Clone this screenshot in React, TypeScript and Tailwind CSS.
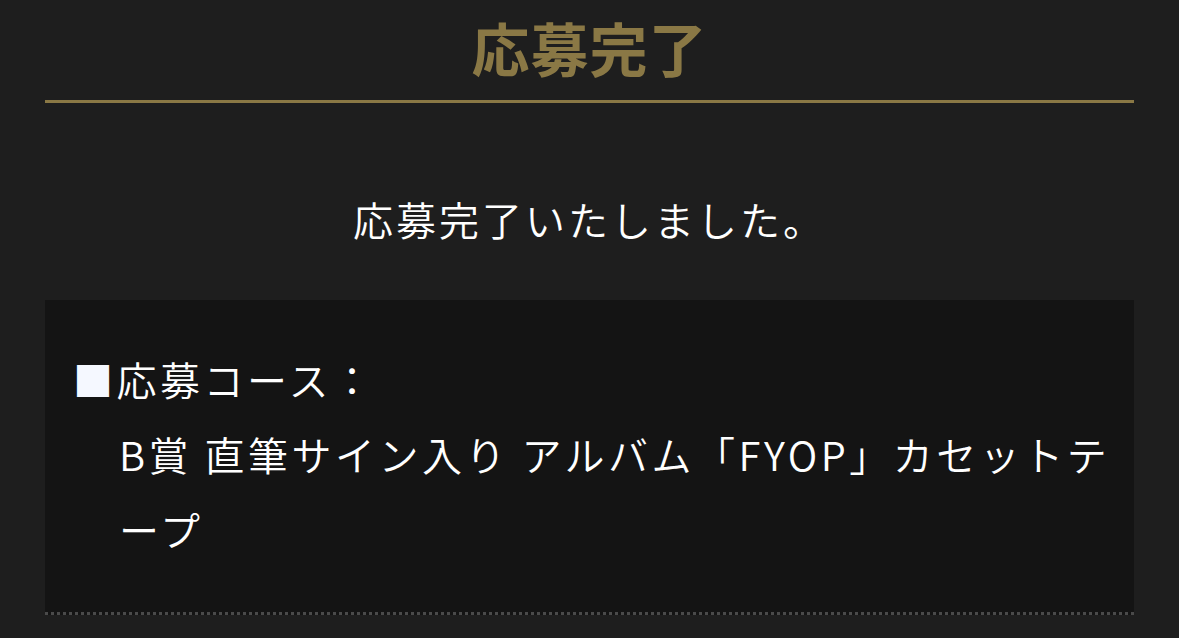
import React from 'react';

const jp = { fontFamily: '"Noto Sans CJK JP", "Noto Sans", sans-serif' };

export default function App() {
  return (
    <div className="min-h-[638px] bg-[#1e1e1e] text-white" style={jp}>
      <div className="mx-[45px]">
        {/* Header */}
        <h1 className="border-b-[3px] border-[#8a7845] pb-[10px] pt-[4px] text-center text-[58px] font-bold leading-[86px] tracking-[1px] text-[#8a7845]">
          応募完了
        </h1>

        {/* Message */}
        <p className="pt-[92px] pb-[57px] text-center text-[40px] font-[350] leading-[48px] tracking-[3px]">
          応募完了いたしました。
        </p>

        {/* Course */}
        <dl className="border-b-[3px] border-dotted border-[#4a4a4a] bg-[#141414] pl-[28px] pr-[20px] pt-[42px] pb-[45px] text-[40px] font-[350] leading-[75px] tracking-[3.5px]">
          <dt>
            <span className="text-[#f5f8ff]">■</span>応募コース：
          </dt>
          <dd className="pl-[46px]">B賞 直筆サイン入り アルバム「FYOP」カセットテープ</dd>
        </dl>
      </div>
    </div>
  );
}
